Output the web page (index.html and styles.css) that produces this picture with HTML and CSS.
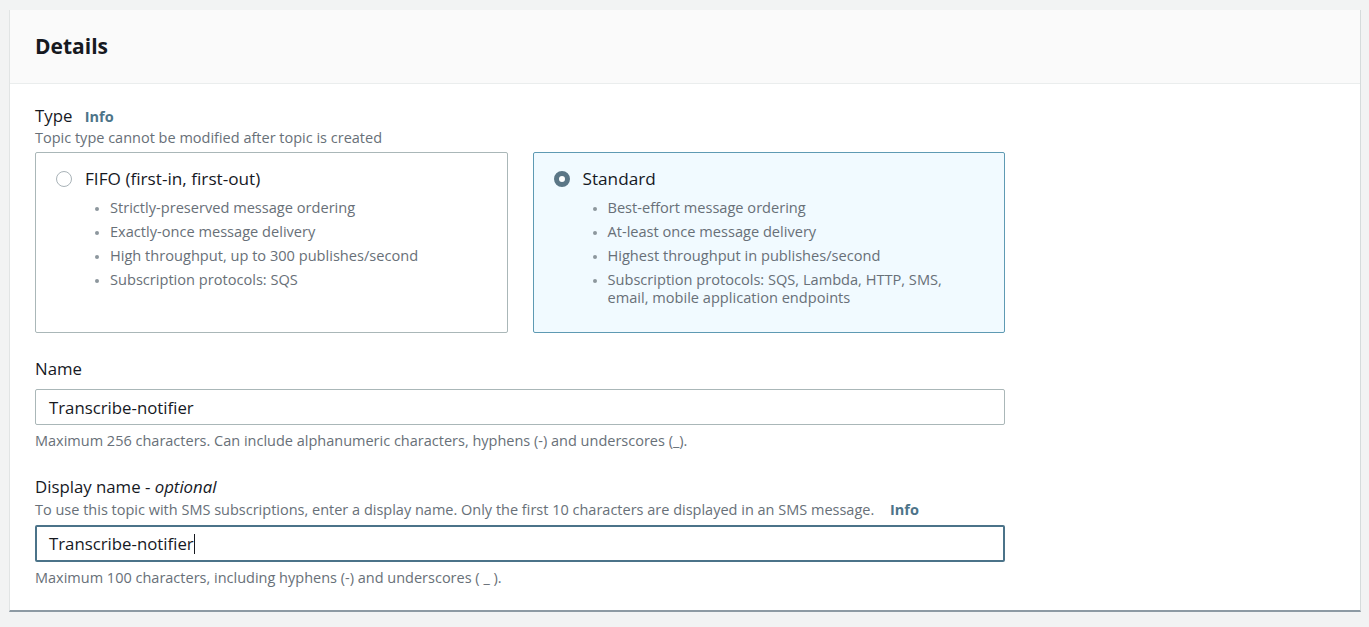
FILE: index.html
```html
<!DOCTYPE html>
<html lang="en">
<head>
<meta charset="utf-8">
<title>Details</title>
<link rel="stylesheet" href="styles.css">
</head>
<body>
<div class="panel">
  <div class="panel-header"><h2>Details</h2></div>
  <div class="panel-body">
    <div class="field type-field">
      <div class="label">Type <a class="info">Info</a></div>
      <div class="desc">Topic type cannot be modified after topic is created</div>
      <div class="tiles">
        <div class="tile">
          <div class="tile-head"><span class="radio"></span><span>FIFO (first-in, first-out)</span></div>
          <ul>
            <li>Strictly-preserved message ordering</li>
            <li>Exactly-once message delivery</li>
            <li>High throughput, up to 300 publishes/second</li>
            <li>Subscription protocols: SQS</li>
          </ul>
        </div>
        <div class="tile selected">
          <div class="tile-head"><span class="radio checked"></span><span>Standard</span></div>
          <ul>
            <li>Best-effort message ordering</li>
            <li>At-least once message delivery</li>
            <li>Highest throughput in publishes/second</li>
            <li>Subscription protocols: SQS, Lambda, HTTP, SMS, email, mobile application endpoints</li>
          </ul>
        </div>
      </div>
    </div>
    <div class="field">
      <div class="label">Name</div>
      <div class="input">Transcribe-notifier</div>
      <div class="hint">Maximum 256 characters. Can include alphanumeric characters, hyphens (-) and underscores (_).</div>
    </div>
    <div class="field">
      <div class="label">Display name - <i>optional</i></div>
      <div class="desc desc-gap">To use this topic with SMS subscriptions, enter a display name. Only the first 10 characters are displayed in an SMS message. <a class="info">Info</a></div>
      <div class="input focused">Transcribe-notifier<span class="caret"></span></div>
      <div class="hint">Maximum 100 characters, including hyphens (-) and underscores ( _ ).</div>
    </div>
  </div>
</div>
</body>
</html>
```

FILE: styles.css
```css
html, body { margin: 0; padding: 0; }
body {
  background: #f2f3f3;
  font-family: "Open Sans", "Liberation Sans", sans-serif;
  color: #16191f;
  padding: 10px 8px 16px 9px;
}
.panel {
  background: #fff;
  border-left: 1px solid #e1e4e4;
  border-right: 1px solid #d5dbdb;
  border-bottom: 2px solid #8d9aa3;
  width: 1350px;
}
.panel-header {
  background: #fafafa;
  border-bottom: 1px solid #eaeded;
  height: 73px;
  display: flex;
  align-items: center;
  padding-left: 25px;
}
.panel-header h2 {
  margin: 0;
  font-size: 21px;
  font-weight: 700;
  color: #16191f;
  position: relative;
  top: -1px;
}
.panel-body {
  padding: 20px 25px 22px 25px;
  width: 970px;
}
.field { margin-bottom: 25px; }
.field:last-child { margin-bottom: 0; }
.label {
  font-size: 16.8px;
  line-height: 22px;
  color: #16191f;
}
.type-field .label { margin-top: 1px; }
.info {
  font-size: 14.5px;
  font-weight: 700;
  color: #4d7489;
  margin-left: 8px;
}
.desc {
  font-size: 14.5px;
  line-height: 20px;
  color: #687078;
}
.desc-gap { margin-top: 2px; }
.desc .info { margin-left: 12px; }
.tiles {
  display: flex;
  gap: 25px;
  margin-top: 4px;
}
.tile {
  flex: 1;
  height: 181px;
  border: 1px solid #aab7b8;
  border-radius: 2px;
  padding: 15px 38px 0 20px;
  box-sizing: border-box;
}
.tile.selected {
  background: #f1faff;
  border-color: #5e9ab3;
}
.tile-head {
  display: flex;
  align-items: center;
  gap: 13px;
  font-size: 17.2px;
  line-height: 22px;
  color: #16191f;
}
.radio {
  width: 14px;
  height: 14px;
  border: 1px solid #a9b3b8;
  border-radius: 50%;
  background: #fff;
  flex: none;
}
.radio.checked {
  width: 6px;
  height: 6px;
  border: 5px solid #5b7686;
}
.tile ul {
  margin: 5px 0 0 0;
  padding-left: 54px;
  font-size: 14.6px;
  color: #687078;
}
.tile ul li { line-height: 18px; padding: 3px 0; }
.tile ul li::marker { color: #8d979d; font-size: 11px; }
.input {
  margin-top: 9px;
  height: 36px;
  border: 1px solid #aab7b8;
  border-radius: 2px;
  box-sizing: border-box;
  padding: 0 13px;
  display: flex;
  align-items: center;
  font-size: 16.8px;
  color: #16191f;
}
.input.focused {
  margin-top: 5px;
  border: 2px solid #4b7389;
  height: 37px;
  padding: 0 12px;
}
.caret {
  display: inline-block;
  width: 1px;
  height: 20px;
  background: #16191f;
}
.hint {
  margin-top: 6px;
  font-size: 14.5px;
  line-height: 20px;
  color: #687078;
}
```
